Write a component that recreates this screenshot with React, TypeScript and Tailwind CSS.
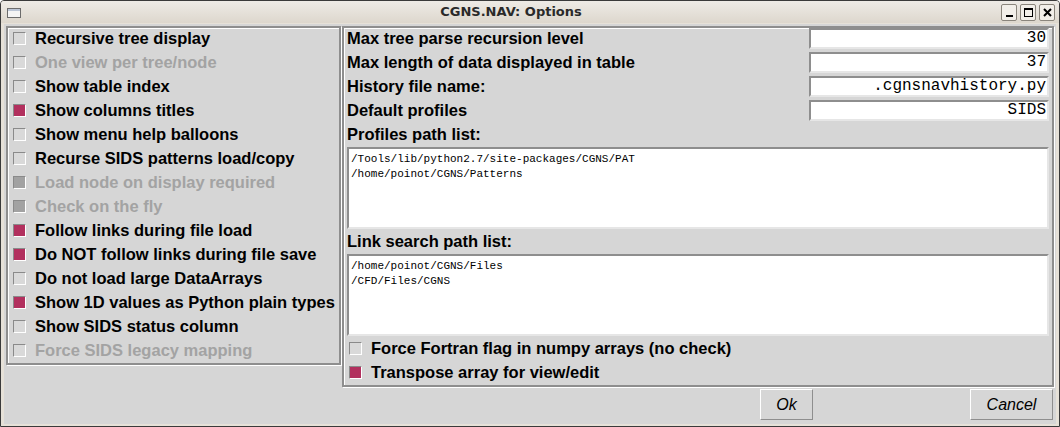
import React from 'react'

type Opt = { label: string; checked?: boolean; disabled?: boolean; grey?: boolean }

const leftOptions: Opt[] = [
  { label: 'Recursive tree display' },
  { label: 'One view per tree/node', disabled: true },
  { label: 'Show table index' },
  { label: 'Show columns titles', checked: true },
  { label: 'Show menu help balloons' },
  { label: 'Recurse SIDS patterns load/copy' },
  { label: 'Load node on display required', disabled: true, grey: true },
  { label: 'Check on the fly', disabled: true, grey: true },
  { label: 'Follow links during file load', checked: true },
  { label: 'Do NOT follow links during file save', checked: true },
  { label: 'Do not load large DataArrays' },
  { label: 'Show 1D values as Python plain types', checked: true },
  { label: 'Show SIDS status column' },
  { label: 'Force SIDS legacy mapping', disabled: true },
]

const fields = [
  { label: 'Max tree parse recursion level', value: '30' },
  { label: 'Max length of data displayed in table', value: '37' },
  { label: 'History file name:', value: '.cgnsnavhistory.py' },
  { label: 'Default profiles', value: 'SIDS' },
]

function Box({ checked, grey }: { checked?: boolean; grey?: boolean }) {
  const fill = checked ? 'bg-[#b2305e]' : grey ? 'bg-[#a2a2a2]' : 'bg-[#d9d9d9]'
  return (
    <span
      className={`inline-block h-[13px] w-[13px] shrink-0 border border-t-[#8a8a8a] border-l-[#8a8a8a] border-b-white border-r-white ${fill}`}
    />
  )
}

function CheckRow({ opt }: { opt: Opt }) {
  return (
    <div className="flex h-[24px] items-center pl-[3px]">
      <Box checked={opt.checked} grey={opt.grey} />
      <span
        className={`ml-[9px] whitespace-nowrap text-[16.5px] font-bold leading-[20px] ${opt.disabled ? 'text-[#a3a3a3]' : 'text-black'}`}
      >
        {opt.label}
      </span>
    </div>
  )
}

function TextList({ lines }: { lines: string[] }) {
  return (
    <div className="h-[82px] border-2 border-t-[#8e8e8e] border-l-[#8e8e8e] border-b-[#e6e6e6] border-r-[#e6e6e6] bg-white px-[2px] pt-[3px] font-['Liberation_Mono',monospace] text-[11px] leading-[15px] text-black">
      {lines.map((l) => (
        <div key={l}>{l}</div>
      ))}
    </div>
  )
}

export default function App() {
  return (
    <div className="flex h-[427px] w-[1060px] flex-col overflow-hidden rounded-t-[4px] border border-[#3a3a3a] bg-[#e6e1d8] font-['Liberation_Sans',Arial,sans-serif]">
      {/* title bar */}
      <div className="relative flex h-[22px] shrink-0 items-center bg-gradient-to-b from-[#eeebe6] to-[#ddd7cd]">
        <div className="ml-[6px] mt-[1px] h-[10px] w-[14px] border border-[#6c6c6c] bg-[#f4f4f4] shadow-[inset_0_2px_0_#bcc6d6]" />
        <div className="flex-1 text-center font-['DejaVu_Sans',sans-serif] text-[13px] font-bold text-[#2a2a2a]">
          CGNS.NAV: Options
        </div>
        <div className="mr-[4px] flex gap-[3px]">
          <div className="flex h-[17px] w-[16px] items-end justify-center rounded-[2px] border border-[#8a857c] bg-[#f2efe9] pb-[3px]">
            <div className="h-[2px] w-[7px] bg-black" />
          </div>
          <div className="flex h-[17px] w-[16px] items-center justify-center rounded-[2px] border border-[#8a857c] bg-[#f2efe9]">
            <div className="h-[9px] w-[9px] border border-t-2 border-black" />
          </div>
          <div className="flex h-[17px] w-[16px] items-center justify-center rounded-[2px] border border-[#8a857c] bg-[#f2efe9]">
            <svg width="9" height="9" viewBox="0 0 9 9">
              <path d="M1 1L8 8M8 1L1 8" stroke="black" strokeWidth="2" />
            </svg>
          </div>
        </div>
      </div>

      {/* body */}
      <div className="mx-[3px] mb-[2px] mt-[1px] flex flex-1 flex-col bg-[#d6d6d6] px-[2px] pt-[2px]">
        <div className="flex gap-[1px]">
          <div className="h-[339px] w-[335px] shrink-0 border-2 border-[#8e8e8e] px-[2px] shadow-[1px_1px_0_#fff,inset_1px_1px_0_#fff]">
            <div className="-mt-[2px]">
              {leftOptions.map((o) => (
                <CheckRow key={o.label} opt={o} />
              ))}
            </div>
          </div>

          <div className="flex h-[361px] flex-1 flex-col border-2 border-[#8e8e8e] px-[3px] shadow-[1px_1px_0_#fff,inset_1px_1px_0_#fff]">
            <div className="-mt-[2px]">
              {fields.map((f) => (
                <div key={f.label} className="flex h-[24px] items-center">
                  <span className="flex-1 whitespace-nowrap text-[16.5px] font-bold leading-[20px] text-black">
                    {f.label}
                  </span>
                  <div className="flex h-[21px] w-[240px] items-center justify-end border-2 border-t-[#8e8e8e] border-l-[#8e8e8e] border-b-[#e6e6e6] border-r-[#e6e6e6] bg-white pr-[1px] font-['Liberation_Mono',monospace] text-[16px] text-black">
                    {f.value}
                  </div>
                </div>
              ))}
              <div className="flex h-[24px] items-center text-[16.5px] font-bold text-black">Profiles path list:</div>
            </div>
            <div className="mt-[1px]">
              <TextList lines={['/Tools/lib/python2.7/site-packages/CGNS/PAT', '/home/poinot/CGNS/Patterns']} />
            </div>
            <div className="flex h-[25px] items-center text-[16.5px] font-bold text-black">Link search path list:</div>
            <TextList lines={['/home/poinot/CGNS/Files', '/CFD/Files/CGNS']} />
            <div className="-ml-[1px]">
              <CheckRow opt={{ label: 'Force Fortran flag in numpy arrays (no check)' }} />
              <CheckRow opt={{ label: 'Transpose array for view/edit', checked: true }} />
            </div>
          </div>
        </div>

        <div className="mt-[2px] flex justify-end pr-[1px]">
          <button className="h-[31px] w-[53px] border border-t-white border-l-white border-b-[#8e8e8e] border-r-[#8e8e8e] text-[16px] italic text-black">
            Ok
          </button>
          <div className="w-[157px]" />
          <button className="h-[31px] w-[83px] border border-t-white border-l-white border-b-[#8e8e8e] border-r-[#8e8e8e] text-[16px] italic text-black">
            Cancel
          </button>
        </div>
      </div>
    </div>
  )
}
